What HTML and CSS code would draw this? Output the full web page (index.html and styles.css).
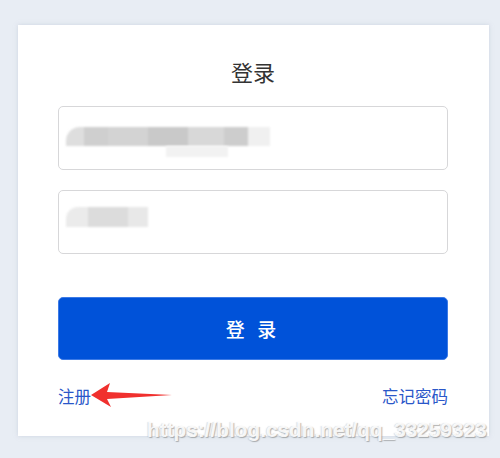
FILE: index.html
```html
<!DOCTYPE html>
<html lang="zh">
<head>
<meta charset="utf-8">
<link rel="stylesheet" href="styles.css">
</head>
<body>
<div class="card">
  <h1 class="title">登录</h1>
  <div class="field">
    <div class="blur-line">
      <span class="b b1"></span><span class="b b2"></span><span class="b b3"></span><span class="b b4"></span><span class="b b5"></span><span class="b b6"></span><span class="b b7"></span>
    </div>
    <div class="blur-line2"></div>
  </div>
  <div class="field">
    <div class="blur-line small">
      <span class="b s1"></span><span class="b s2"></span><span class="b s3"></span>
    </div>
  </div>
  <button class="btn">登 录</button>
  <div class="links">
    <a class="link reg">注册</a>
    <a class="link">忘记密码</a>
  </div>
  <svg class="arrow" width="90" height="30" viewBox="0 0 90 30">
    <path d="M1 14 L20 2 L17 11 L82 14 L17 18 L21 26 Z" fill="#f0302e"/>
  </svg>
</div>
<div class="watermark">https://blog.csdn.net/qq_33259323</div>
</body>
</html>
```
FILE: styles.css
```css
html, body {
  margin: 0;
  padding: 0;
}
body {
  width: 500px;
  height: 458px;
  background: #e8edf4;
  font-family: "Noto Sans CJK SC", "Liberation Sans", sans-serif;
  position: relative;
  overflow: hidden;
}
.card {
  position: relative;
  margin: 25px 0 0 18px;
  width: 471px;
  box-sizing: border-box;
  padding: 31px 41px 30px 40px;
  background: #fff;
  box-shadow: 0 0 4px rgba(180, 190, 205, 0.5);
}
.title {
  margin: 0;
  text-align: center;
  font-size: 22px;
  line-height: 30px;
  font-weight: 400;
  color: #333;
}
.field {
  margin-top: 20px;
  height: 64px;
  box-sizing: border-box;
  border: 1.5px solid #d7d7d9;
  border-radius: 5px;
  padding: 20px 0 0 7px;
}
.field + .field {
  padding-top: 16px;
}
.blur-line {
  display: flex;
  height: 19px;
  filter: blur(1px);
}
.b {
  display: block;
  height: 100%;
}
.b1 { width: 18px; background: #dedede; border-radius: 14px 0 0 0; }
.b2 { width: 24px; background: #cfcfcf; }
.b3 { width: 40px; background: #d3d3d3; }
.b4 { width: 40px; background: #c9c9c9; }
.b5 { width: 36px; background: #d8d8d8; }
.b6 { width: 24px; background: #cdcdcd; }
.b7 { width: 22px; background: #f0f0f0; }
.blur-line2 {
  margin: 0 0 0 100px;
  width: 62px;
  height: 11px;
  background: #f2f2f2;
  filter: blur(1px);
}
.small { height: 20px; }
.s1 { width: 22px; background: #ebebeb; border-radius: 12px 0 0 0; }
.s2 { width: 40px; background: #dcdcdc; }
.s3 { width: 20px; background: #e8e8e8; }
.btn {
  display: block;
  width: 100%;
  height: 63px;
  margin-top: 43px;
  border: 1px solid #3c7ae6;
  border-radius: 5px;
  background: #0052d9;
  color: #fff;
  font-family: "Noto Sans CJK SC", sans-serif;
  font-size: 19px;
  font-weight: 500;
  letter-spacing: 4px;
  padding: 0;
}
.links {
  display: flex;
  justify-content: space-between;
  margin-top: 26px;
  line-height: 20px;
  font-size: 16.5px;
}
.link {
  color: #2a57c9;
}
.arrow {
  position: absolute;
  left: 72px;
  top: 356px;
}
.watermark {
  position: absolute;
  left: 147px;
  top: 418px;
  font-family: "Liberation Sans", sans-serif;
  font-size: 20.8px;
  font-weight: bold;
  color: rgba(255, 255, 255, 0.9);
  text-shadow: 1px 1px 1px rgba(120, 120, 120, 0.55), -1px 0 1px rgba(150,150,150,0.3);
  white-space: nowrap;
}
```
